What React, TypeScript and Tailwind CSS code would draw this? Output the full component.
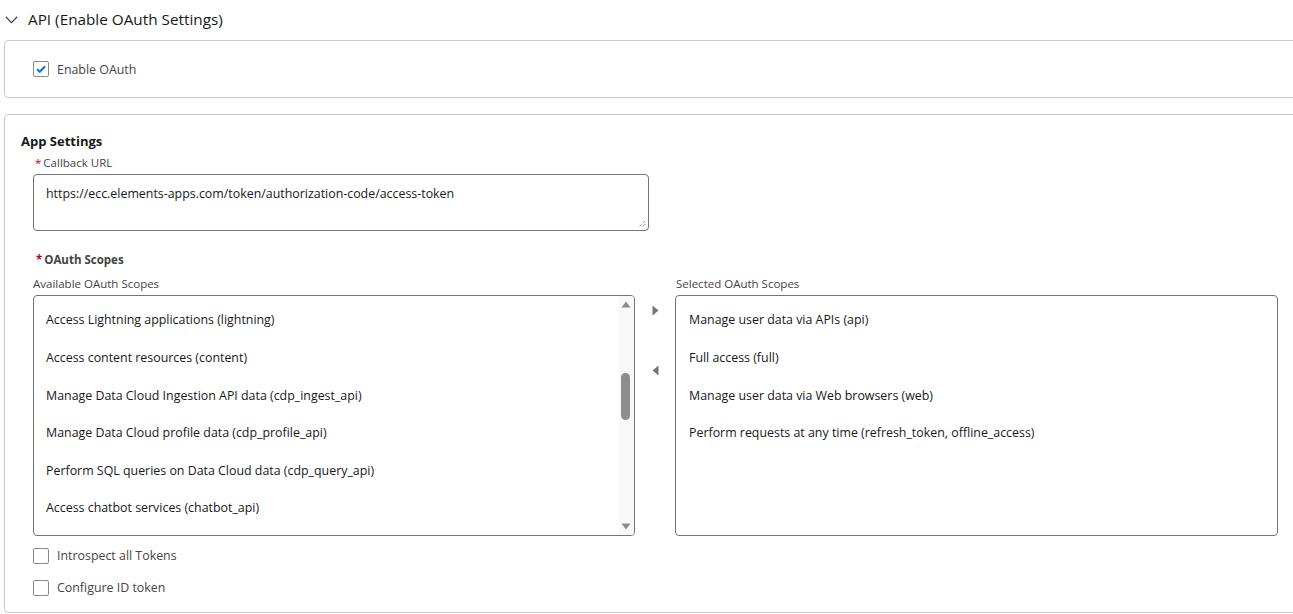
import React from "react";

const available = [
  "Access Lightning applications (lightning)",
  "Access content resources (content)",
  "Manage Data Cloud Ingestion API data (cdp_ingest_api)",
  "Manage Data Cloud profile data (cdp_profile_api)",
  "Perform SQL queries on Data Cloud data (cdp_query_api)",
  "Access chatbot services (chatbot_api)",
];

const selected = [
  "Manage user data via APIs (api)",
  "Full access (full)",
  "Manage user data via Web browsers (web)",
  "Perform requests at any time (refresh_token, offline_access)",
];

function Checkbox({ checked, label }: { checked?: boolean; label: string }) {
  return (
    <label className="flex items-center gap-[8px]">
      <span className="w-[16px] h-[16px] border border-[#8a8a8a] rounded-[2px] bg-white flex items-center justify-center">
        {checked && (
          <svg width="10" height="8" viewBox="0 0 10 8">
            <path d="M1 4.2 L3.8 6.8 L9 1.2" fill="none" stroke="#0176d3" strokeWidth="2" />
          </svg>
        )}
      </span>
      <span className="text-[12.4px] leading-[18px] text-[#444444] mt-[1px]">{label}</span>
    </label>
  );
}

function Label({ text, required, bold }: { text: string; required?: boolean; bold?: boolean }) {
  return (
    <div className={`text-[11.5px] leading-[18px] text-[#444444] ${bold ? "font-bold text-[#2e2e2e]" : ""}`}>
      {required && <span className="text-[#ba0517] mr-[2px]">*</span>}
      {text}
    </div>
  );
}

export default function App() {
  return (
    <div
      className="w-[1293px] h-[614px] overflow-hidden bg-white"
      style={{ fontFamily: '"Open Sans", "Noto Sans", sans-serif' }}
    >
      <div className="h-[40px] flex items-center pl-[5px] gap-[10px]">
        <svg width="13" height="8" viewBox="0 0 13 8">
          <path d="M0.8 0.8 L6.5 6.6 L12.2 0.8" fill="none" stroke="#444444" strokeWidth="1.3" />
        </svg>
        <span className="text-[15.3px] text-[#181818] -mt-[2px]">API (Enable OAuth Settings)</span>
      </div>

      <div className="ml-[4px] w-[1320px] h-[58px] border border-[#c9c9c9] rounded-[4px] flex items-center pl-[28px]">
        <Checkbox checked label="Enable OAuth" />
      </div>

      <div className="ml-[4px] mt-[16px] w-[1320px] h-[499px] border border-[#c9c9c9] rounded-[4px] pt-[16px] pl-[16px]">
        <div className="text-[13px] leading-[20px] font-bold text-[#181818]">App Settings</div>
        <div className="pl-[12px]">
          <div className="mt-[3px] pl-[2px]">
            <Label text="Callback URL" required />
          </div>
          <div className="relative mt-[2px] w-[616px] h-[57px] border border-[#747474] rounded-[4px] pl-[12px] pt-[9px] text-[12.4px] leading-[19px] text-[#181818]">
            https://ecc.elements-apps.com/token/authorization-code/access-token
            <svg className="absolute right-[2px] bottom-[2px]" width="8" height="8" viewBox="0 0 8 8">
              <path d="M7 1 L1 7 M7 4 L4 7" stroke="#777777" strokeWidth="1" strokeDasharray="1 1" />
            </svg>
          </div>

          <div className="mt-[20px] pl-[3px]">
            <Label text="OAuth Scopes" required bold />
          </div>

          <div className="mt-[6px] flex">
            <div className="w-[602px]">
              <Label text="Available OAuth Scopes" />
              <div className="relative mt-[2px] h-[241px] border border-[#747474] rounded-[4px] overflow-hidden">
                <div className="pt-[6px] pl-[12px]">
                  {available.map((t) => (
                    <div key={t} className="h-[37.6px] flex items-center text-[12.4px] text-[#181818]">
                      {t}
                    </div>
                  ))}
                </div>
                <div className="absolute top-0 right-0 bottom-0 w-[15px] bg-[#f8f8f8]">
                  <svg className="absolute top-[5px] left-[2px]" width="10" height="7" viewBox="0 0 10 7">
                    <path d="M5 0.5 L9.5 6.5 L0.5 6.5 Z" fill="#8a8a8a" />
                  </svg>
                  <div className="absolute top-[77px] left-[2px] w-[9px] h-[47px] rounded-full bg-[#8e8e8e]" />
                  <svg className="absolute bottom-[5px] left-[2px]" width="10" height="7" viewBox="0 0 10 7">
                    <path d="M0.5 0.5 L9.5 0.5 L5 6.5 Z" fill="#8a8a8a" />
                  </svg>
                </div>
              </div>
            </div>

            <div className="w-[40px] flex flex-col items-center pt-[30px] gap-[49px]">
              <svg width="7" height="11" viewBox="0 0 7 11">
                <path d="M0.5 0.5 L6.5 5.5 L0.5 10.5 Z" fill="#747474" />
              </svg>
              <svg width="7" height="11" viewBox="0 0 7 11">
                <path d="M6.5 0.5 L0.5 5.5 L6.5 10.5 Z" fill="#747474" />
              </svg>
            </div>

            <div className="w-[603px]">
              <div className="pl-[1px]">
                <Label text="Selected OAuth Scopes" />
              </div>
              <div className="mt-[2px] h-[241px] border border-[#747474] rounded-[4px] pt-[6px] pl-[13px]">
                {selected.map((t) => (
                  <div key={t} className="h-[37.6px] flex items-center text-[12.4px] text-[#181818]">
                    {t}
                  </div>
                ))}
              </div>
            </div>
          </div>

          <div className="mt-[10px] flex flex-col gap-[13px]">
            <Checkbox label="Introspect all Tokens" />
            <Checkbox label="Configure ID token" />
          </div>
        </div>
      </div>
    </div>
  );
}
